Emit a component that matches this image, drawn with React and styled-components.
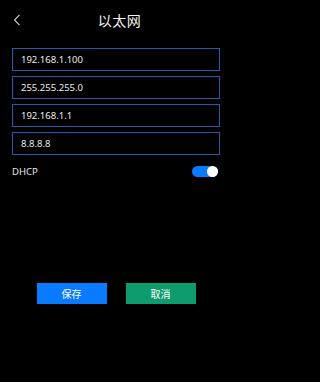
import styled, { createGlobalStyle } from "styled-components";

const GlobalStyle = createGlobalStyle`
  html, body {
    margin: 0;
    padding: 0;
    background: #000;
  }
  body {
    font-family: "Noto Sans", "Noto Sans CJK SC", sans-serif;
  }
`;

const Screen = styled.div`
  width: 239px;
  height: 382px;
  background: #000;
  color: #fff;
  display: flex;
  flex-direction: column;
  overflow: hidden;
`;

const Header = styled.div`
  position: relative;
  height: 40px;
  display: flex;
  align-items: center;
  justify-content: center;
`;

const BackButton = styled.button`
  position: absolute;
  left: 10px;
  top: 12px;
  width: 14px;
  height: 16px;
  padding: 0;
  border: none;
  background: none;
  display: flex;
  align-items: center;
  justify-content: center;
`;

const Title = styled.h1`
  margin: 0;
  font-size: 14px;
  font-weight: 400;
  letter-spacing: 0.5px;
  color: #f2f2f2;
`;

const Form = styled.div`
  padding: 8px 0 0 12px;
  width: 208px;
  display: flex;
  flex-direction: column;
  gap: 5px;
`;

const Field = styled.input`
  box-sizing: border-box;
  width: 208px;
  height: 23px;
  padding: 0 8px;
  border: 1px solid #1d5dae;
  background: #000;
  color: #ececec;
  font-family: inherit;
  font-size: 9.5px;
  outline: none;
`;

const SwitchRow = styled.div`
  margin-top: 4px;
  display: flex;
  align-items: center;
  justify-content: space-between;
  padding-right: 2px;
  height: 14px;
`;

const Label = styled.span`
  font-size: 9.5px;
  color: #e6e6e6;
`;

const Toggle = styled.div`
  position: relative;
  width: 26px;
  height: 11px;
  border-radius: 6px;
  background: ${(props) => (props.on ? "#0a7bff" : "#555")};
`;

const Knob = styled.div`
  position: absolute;
  top: 0;
  ${(props) => (props.on ? "right: 0;" : "left: 0;")}
  width: 11px;
  height: 11px;
  border-radius: 50%;
  background: #fff;
`;

const Actions = styled.div`
  margin-top: 100px;
  display: flex;
  justify-content: center;
  gap: 19px;
`;

const ActionButton = styled.button`
  width: 70px;
  height: 21px;
  border: none;
  padding: 0;
  background: ${(props) => props.bg};
  color: #fff;
  font-family: inherit;
  font-size: 10px;
`;

export default function App() {
  const fields = ["192.168.1.100", "255.255.255.0", "192.168.1.1", "8.8.8.8"];
  return (
    <>
      <GlobalStyle />
      <Screen>
        <Header>
          <BackButton>
            <svg width="8" height="12" viewBox="0 0 8 12" fill="none">
              <path d="M6.5 0.8 L1.5 6 L6.5 11.2" stroke="#cfcfcf" strokeWidth="1.1" />
            </svg>
          </BackButton>
          <Title>以太网</Title>
        </Header>
        <Form>
          {fields.map((v) => (
            <Field key={v} defaultValue={v} />
          ))}
          <SwitchRow>
            <Label>DHCP</Label>
            <Toggle on>
              <Knob on />
            </Toggle>
          </SwitchRow>
          <Actions>
            <ActionButton bg="#0a7bff">保存</ActionButton>
            <ActionButton bg="#0e9b6e">取消</ActionButton>
          </Actions>
        </Form>
      </Screen>
    </>
  );
}
